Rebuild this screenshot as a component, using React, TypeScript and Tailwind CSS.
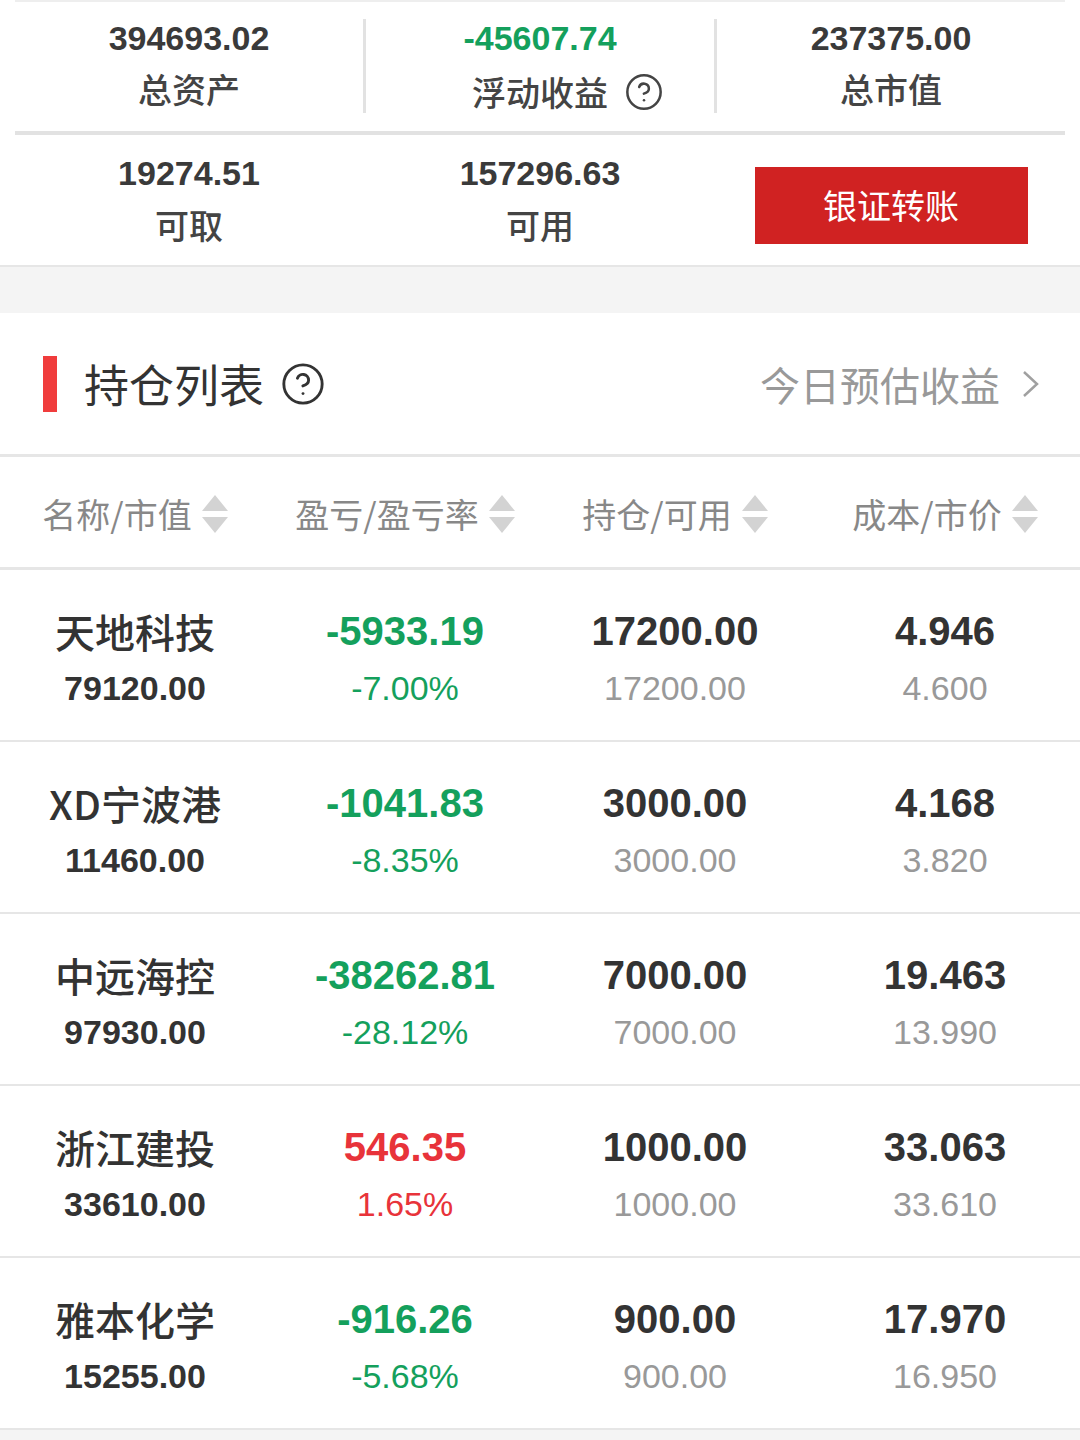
import { CircleHelp } from 'lucide-react';

type Holding = {
  name: string;
  value: string;
  pnl: string;
  rate: string;
  up: boolean;
  qty: string;
  avail: string;
  cost: string;
  price: string;
};

const holdings: Holding[] = [
  { name: '天地科技', value: '79120.00', pnl: '-5933.19', rate: '-7.00%', up: false, qty: '17200.00', avail: '17200.00', cost: '4.946', price: '4.600' },
  { name: 'XD宁波港', value: '11460.00', pnl: '-1041.83', rate: '-8.35%', up: false, qty: '3000.00', avail: '3000.00', cost: '4.168', price: '3.820' },
  { name: '中远海控', value: '97930.00', pnl: '-38262.81', rate: '-28.12%', up: false, qty: '7000.00', avail: '7000.00', cost: '19.463', price: '13.990' },
  { name: '浙江建投', value: '33610.00', pnl: '546.35', rate: '1.65%', up: true, qty: '1000.00', avail: '1000.00', cost: '33.063', price: '33.610' },
  { name: '雅本化学', value: '15255.00', pnl: '-916.26', rate: '-5.68%', up: false, qty: '900.00', avail: '900.00', cost: '17.970', price: '16.950' },
];

const num = "font-['Liberation_Sans','Noto_Sans_CJK_SC',sans-serif]";
const cjk = "font-['Noto_Sans_CJK_SC','Liberation_Sans',sans-serif]";

function SortArrows() {
  return (
    <svg width="26" height="38" viewBox="0 0 26 38" className="shrink-0">
      <path d="M13 0 L26 16 L0 16 Z" fill="#d3d3d3" />
      <path d="M0 22 L26 22 L13 38 Z" fill="#d3d3d3" />
    </svg>
  );
}

function Stat({ value, label, green, help }: { value: string; label: string; green?: boolean; help?: boolean }) {
  return (
    <div className="flex-1 flex flex-col items-center">
      <div className={`${num} font-bold text-[34px] leading-none ${green ? 'text-[#14a05c]' : 'text-[#3a3a3a]'}`}>{value}</div>
      <div className={`${cjk} font-medium text-[34px] leading-none mt-[17px] text-[#444] flex items-center gap-[16px]`}>
        {help && <span className="w-[40px] h-[40px]" />}
        {label}
        {help && <CircleHelp className="w-[40px] h-[40px] text-[#444]" strokeWidth={1.5} />}
      </div>
    </div>
  );
}

export default function App() {
  return (
    <div className="w-[1080px] min-h-[1440px] bg-white">
      {/* account summary */}
      <div className="bg-white border-b-2 border-[#e6e6e6]">
        <div className="mx-[15px] h-[2px] bg-[#eeeeee]" />
        <div className="mx-[15px] flex items-stretch pt-[19px] h-[129px]">
          <Stat value="394693.02" label="总资产" />
          <div className="w-[3px] bg-[#e2e2e2] mt-[-2px] h-[94px]" />
          <Stat value="-45607.74" label="浮动收益" green help />
          <div className="w-[3px] bg-[#e2e2e2] mt-[-2px] h-[94px]" />
          <Stat value="237375.00" label="总市值" />
        </div>
        <div className="mx-[15px] h-[4px] bg-[#e2e2e2]" />
        <div className="mx-[15px] flex items-center h-[130px]">
          <div className="flex-1 flex flex-col items-center pb-[2px]">
            <div className={`${num} font-bold text-[34px] leading-none text-[#3a3a3a]`}>19274.51</div>
            <div className={`${cjk} font-medium text-[34px] leading-none mt-[18px] text-[#444]`}>可取</div>
          </div>
          <div className="w-[3px]" />
          <div className="flex-1 flex flex-col items-center pb-[2px]">
            <div className={`${num} font-bold text-[34px] leading-none text-[#3a3a3a]`}>157296.63</div>
            <div className={`${cjk} font-medium text-[34px] leading-none mt-[18px] text-[#444]`}>可用</div>
          </div>
          <div className="w-[3px]" />
          <div className="flex-1 flex justify-center pt-[10px]">
            <button className={`${cjk} w-[273px] h-[77px] bg-[#d02222] text-white text-[34px] leading-none`}>银证转账</button>
          </div>
        </div>
      </div>

      <div className="h-[46px] bg-[#f4f4f4]" />

      {/* holdings header */}
      <div className="h-[144px] flex items-center pl-[43px] pr-[40px] border-b-[3px] border-[#e6e6e6]">
        <div className="w-[14px] h-[56px] bg-[#f03c3c]" />
        <div className={`${cjk} ml-[27px] text-[45px] leading-none text-[#333]`}>持仓列表</div>
        <CircleHelp className="ml-[16px] w-[46px] h-[46px] text-[#333]" strokeWidth={1.5} />
        <div className="flex-1" />
        <div className={`${cjk} text-[40px] leading-none text-[#999]`}>今日预估收益</div>
        <svg width="18" height="28" viewBox="0 0 18 28" className="ml-[22px]">
          <path d="M2 2 L15 14 L2 26" fill="none" stroke="#a0a0a0" strokeWidth="2.5" />
        </svg>
      </div>

      {/* column titles */}
      <div className="h-[113px] grid grid-cols-4 items-center border-b-[3px] border-[#e6e6e6]">
        {['名称/市值', '盈亏/盈亏率', '持仓/可用', '成本/市价'].map((t) => (
          <div key={t} className="flex items-center justify-center gap-[10px] pt-[3px]">
            <span className={`${cjk} text-[34px] leading-none text-[#888]`}>{t}</span>
            <SortArrows />
          </div>
        ))}
      </div>

      {/* rows */}
      {holdings.map((h) => {
        const color = h.up ? 'text-[#e8333a]' : 'text-[#14a05c]';
        return (
          <div key={h.name} className="h-[172px] grid grid-cols-4 border-b-2 border-[#e6e6e6] pt-[41px]">
            <div className="flex flex-col items-center">
              <div className={`${cjk} font-medium text-[40px] leading-none text-[#333] h-[40px] flex items-center`}>{h.name}</div>
              <div className={`${num} font-bold text-[34px] leading-none text-[#333] mt-[20px]`}>{h.value}</div>
            </div>
            <div className="flex flex-col items-center">
              <div className={`${num} font-bold text-[40px] leading-none ${color}`}>{h.pnl}</div>
              <div className={`${num} text-[34px] leading-none mt-[20px] ${color}`}>{h.rate}</div>
            </div>
            <div className="flex flex-col items-center">
              <div className={`${num} font-bold text-[40px] leading-none text-[#333]`}>{h.qty}</div>
              <div className={`${num} text-[34px] leading-none mt-[20px] text-[#999]`}>{h.avail}</div>
            </div>
            <div className="flex flex-col items-center">
              <div className={`${num} font-bold text-[40px] leading-none text-[#333]`}>{h.cost}</div>
              <div className={`${num} text-[34px] leading-none mt-[20px] text-[#999]`}>{h.price}</div>
            </div>
          </div>
        );
      })}
      <div className="h-[10px] bg-[#f4f4f4]" />
    </div>
  );
}
